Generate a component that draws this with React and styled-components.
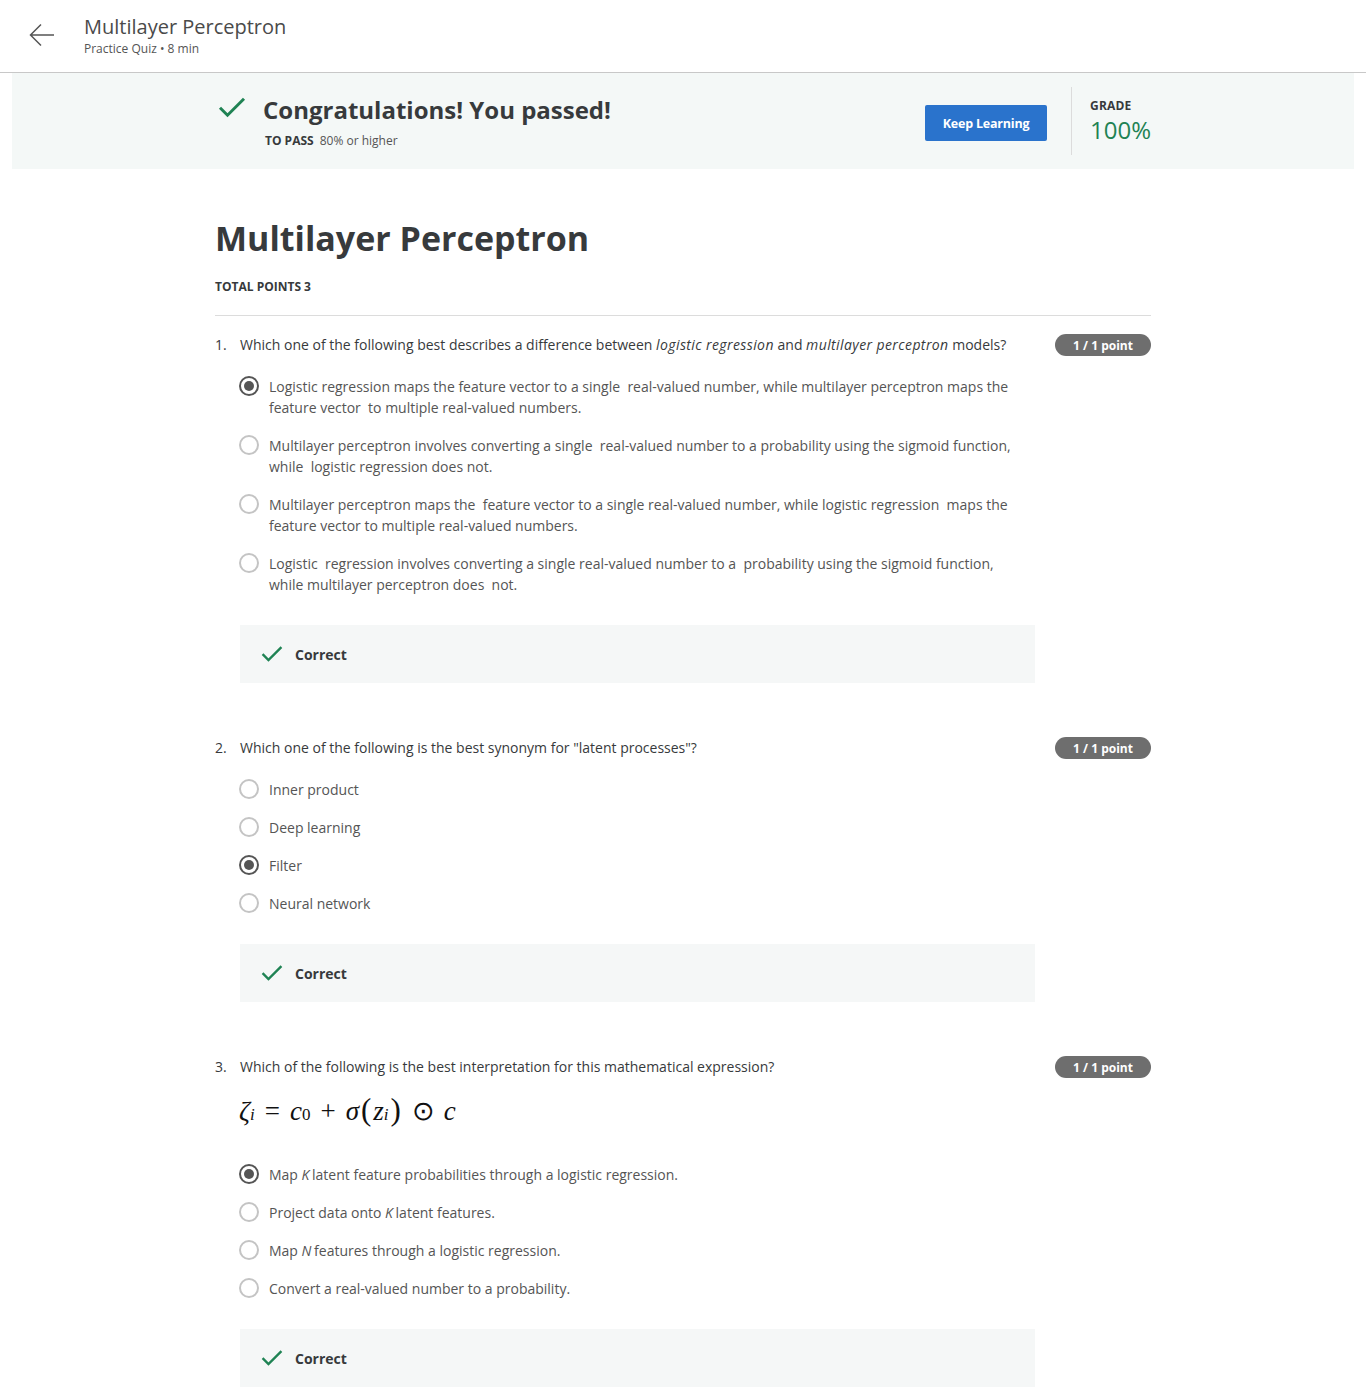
import React from "react";
import styled, { createGlobalStyle } from "styled-components";

const Global = createGlobalStyle`
  html, body { margin: 0; padding: 0; background: #fff; }
  body { font-family: "Open Sans", "Noto Sans", Arial, sans-serif; color: #373a3c; }
  * { box-sizing: border-box; }
`;

const Header = styled.header`
  height: 73px;
  border-bottom: 1px solid #c8c8c8;
  display: flex;
  align-items: center;
  padding-left: 28px;
  gap: 28px;
`;

const BackButton = styled.button`
  border: 0;
  background: none;
  padding: 0;
  width: 28px;
  height: 28px;
  display: flex;
  align-items: center;
  justify-content: center;
  cursor: pointer;
  margin-top: -2px;
`;

const HeaderText = styled.div`
  display: flex;
  flex-direction: column;
`;

const HeaderTitle = styled.div`
  font-size: 20px;
  line-height: 26px;
  color: #4a4a4a;
`;

const HeaderSub = styled.div`
  font-size: 12px;
  line-height: 18px;
  color: #555;
`;

const Banner = styled.section`
  margin: 0 12px;
  background: #f4f8f7;
  height: 96px;
  display: flex;
  justify-content: center;
`;

const Column = styled.div`
  width: 936px;
  display: flex;
`;

const BannerLeft = styled.div`
  flex: 1;
  display: flex;
  align-items: flex-start;
  padding-top: 23px;
  padding-left: 3px;
  gap: 17px;
`;

const BannerText = styled.div`
  display: flex;
  flex-direction: column;
`;

const BannerHeading = styled.h1`
  margin: 0;
  font-size: 24px;
  line-height: 28px;
  font-weight: 700;
  color: #373a3c;
`;

const PassLine = styled.div`
  margin-top: 8px;
  font-size: 12px;
  line-height: 18px;
  color: #555;
  padding-left: 2px;
  b { color: #373a3c; font-weight: 700; margin-right: 6px; }
`;

const KeepButton = styled.button`
  align-self: center;
  margin-top: 4px;
  height: 36px;
  width: 122px;
  border: 0;
  border-radius: 2px;
  background: #2a73cc;
  color: #fff;
  font-family: "Open Sans", Arial, sans-serif;
  font-weight: 700;
  font-size: 12.5px;
  letter-spacing: -0.2px;
  cursor: pointer;
  margin-right: 24px;
`;

const GradeBox = styled.div`
  border-left: 1px solid #dcdcdc;
  margin: 14px 0;
  padding: 11px 0 0 18px;
  width: 80px;
  display: flex;
  flex-direction: column;
  gap: 1px;
`;

const GradeLabel = styled.div`
  font-size: 12px;
  font-weight: 700;
  line-height: 16px;
  color: #373a3c;
  letter-spacing: 0.2px;
`;

const GradeValue = styled.div`
  font-size: 24px;
  line-height: 30px;
  color: #1f8354;
`;

const Main = styled.main`
  display: flex;
  justify-content: center;
  padding-top: 46px;
`;

const Content = styled.div`
  width: 936px;
`;

const Title = styled.h2`
  margin: 0;
  font-size: 34px;
  line-height: 46px;
  font-weight: 700;
  color: #373a3c;
`;

const TotalPoints = styled.div`
  margin-top: 18px;
  font-size: 12px;
  font-weight: 700;
  line-height: 16px;
  color: #373a3c;
`;

const Rule = styled.hr`
  border: 0;
  border-top: 1px solid #dcdcdc;
  margin: 20px 0 0;
`;

const QuestionBlock = styled.div`
  padding-top: ${(p) => p.$top}px;
`;

const QuestionRow = styled.div`
  display: flex;
  align-items: flex-start;
`;

const QNum = styled.div`
  width: 25px;
  font-size: 14px;
  line-height: 21px;
  color: #373a3c;
`;

const QText = styled.div`
  flex: 1;
  font-size: 14px;
  line-height: 21px;
  color: #373a3c;
  em { font-style: italic; letter-spacing: 0.4px; }
`;

const Badge = styled.div`
  width: 96px;
  height: 22px;
  border-radius: 11px;
  background: #6e6e6e;
  color: #fff;
  font-size: 12px;
  font-weight: 700;
  display: flex;
  align-items: center;
  justify-content: center;
`;

const Options = styled.div`
  margin-top: ${(p) => p.$top}px;
  padding-left: 24px;
  display: flex;
  flex-direction: column;
  gap: 17px;
  width: 820px;
`;

const Option = styled.label`
  display: flex;
  align-items: flex-start;
  gap: 10px;
  font-size: 14px;
  line-height: 21px;
  color: #555;
  em { font-style: italic; margin-right: -1px; }
`;

const Radio = styled.span`
  flex: none;
  width: 20px;
  height: 20px;
  border-radius: 50%;
  border: 2px solid ${(p) => (p.$checked ? "#555" : "#c4c4c4")};
  display: flex;
  align-items: center;
  justify-content: center;
  &::after {
    content: "";
    width: 10px;
    height: 10px;
    border-radius: 50%;
    background: ${(p) => (p.$checked ? "#555" : "transparent")};
  }
`;

const OptText = styled.span`
  white-space: pre-wrap;
  max-width: 750px;
`;

const Feedback = styled.div`
  margin: 30px 0 0 25px;
  width: 795px;
  height: 58px;
  background: #f5f7f7;
  display: flex;
  align-items: center;
  padding-left: 21px;
  gap: 12px;
  font-size: 14px;
  font-weight: 700;
  color: #373a3c;
`;

const MathLine = styled.div`
  margin: 16px 0 0 24px;
  font-family: "Liberation Serif", "Times New Roman", serif;
  font-size: 27px;
  line-height: 32px;
  color: #111;
  display: flex;
  align-items: baseline;
  i { font-style: italic; }
  sub { font-size: 17px; vertical-align: -6px; line-height: 0; }
`;

const Op = styled.span`
  margin: 0 ${(p) => p.$m || 10}px;
  font-style: normal;
`;

const Paren = styled.span`
  font-size: 31px;
  margin: 0 2px;
`;

const Check = ({ size = 22 }) => (
  <svg width={size} height={size * 0.8} viewBox="0 0 28 22" fill="none">
    <path d="M2 11.5 L9.5 19 L26 2.5" stroke="#1f8354" strokeWidth="3" />
  </svg>
);

const Arrow = () => (
  <svg width="26" height="24" viewBox="0 0 26 24" fill="none">
    <path d="M25 12 H2 M12 1.5 L1.5 12 L12 22.5" stroke="#555" strokeWidth="1.5" />
  </svg>
);

const questions = [
  {
    n: "1.",
    text: (
      <>
        Which one of the following best describes a difference between <em>logistic regression</em> and{" "}
        <em>multilayer perceptron</em> models?
      </>
    ),
    options: [
      "Logistic regression maps the feature vector to a single  real-valued number, while multilayer perceptron maps the feature vector  to multiple real-valued numbers.",
      "Multilayer perceptron involves converting a single  real-valued number to a probability using the sigmoid function, while  logistic regression does not.",
      "Multilayer perceptron maps the  feature vector to a single real-valued number, while logistic regression  maps the feature vector to multiple real-valued numbers.",
      "Logistic  regression involves converting a single real-valued number to a  probability using the sigmoid function, while multilayer perceptron does  not.",
    ],
    checked: 0,
    top: 18,
  },
  {
    n: "2.",
    text: <>Which one of the following is the best synonym for "latent processes"?</>,
    options: ["Inner product", "Deep learning", "Filter", "Neural network"],
    checked: 2,
    top: 54,
  },
  {
    n: "3.",
    text: <>Which of the following is the best interpretation for this mathematical expression?</>,
    math: true,
    options: [
      <>Map <em>K</em> latent feature probabilities through a logistic regression.</>,
      <>Project data onto <em>K</em> latent features.</>,
      <>Map <em>N</em> features through a logistic regression.</>,
      <>Convert a real-valued number to a probability.</>,
    ],
    checked: 0,
    top: 54,
  },
];

export default function App() {
  return (
    <>
      <Global />
      <Header>
        <BackButton aria-label="Back">
          <Arrow />
        </BackButton>
        <HeaderText>
          <HeaderTitle>Multilayer Perceptron</HeaderTitle>
          <HeaderSub>Practice Quiz • 8 min</HeaderSub>
        </HeaderText>
      </Header>
      <Banner>
        <Column>
          <BannerLeft>
            <Check size={28} />
            <BannerText>
              <BannerHeading>Congratulations! You passed!</BannerHeading>
              <PassLine>
                <b>TO PASS</b>80% or higher
              </PassLine>
            </BannerText>
          </BannerLeft>
          <KeepButton>Keep Learning</KeepButton>
          <GradeBox>
            <GradeLabel>GRADE</GradeLabel>
            <GradeValue>100%</GradeValue>
          </GradeBox>
        </Column>
      </Banner>
      <Main>
        <Content>
          <Title>Multilayer Perceptron</Title>
          <TotalPoints>TOTAL POINTS 3</TotalPoints>
          <Rule />
          {questions.map((q) => (
            <QuestionBlock key={q.n} $top={q.top}>
              <QuestionRow>
                <QNum>{q.n}</QNum>
                <QText>{q.text}</QText>
                <Badge>1 / 1 point</Badge>
              </QuestionRow>
              {q.math && (
                <MathLine>
                  <i>ζ</i>
                  <sub><i>i</i></sub>
                  <Op>=</Op>
                  <i>c</i>
                  <sub>0</sub>
                  <Op>+</Op>
                  <i>σ</i>
                  <Paren>(</Paren>
                  <i>z</i>
                  <sub><i>i</i></sub>
                  <Paren>)</Paren>
                  <Op $m={9}>⊙</Op>
                  <i>c</i>
                </MathLine>
              )}
              <Options $top={q.math ? 37 : 20}>
                {q.options.map((o, i) => (
                  <Option key={i}>
                    <Radio $checked={i === q.checked} />
                    <OptText>{o}</OptText>
                  </Option>
                ))}
              </Options>
              <Feedback>
                <Check size={22} />
                Correct
              </Feedback>
            </QuestionBlock>
          ))}
          <div style={{ height: 40 }} />
        </Content>
      </Main>
    </>
  );
}
